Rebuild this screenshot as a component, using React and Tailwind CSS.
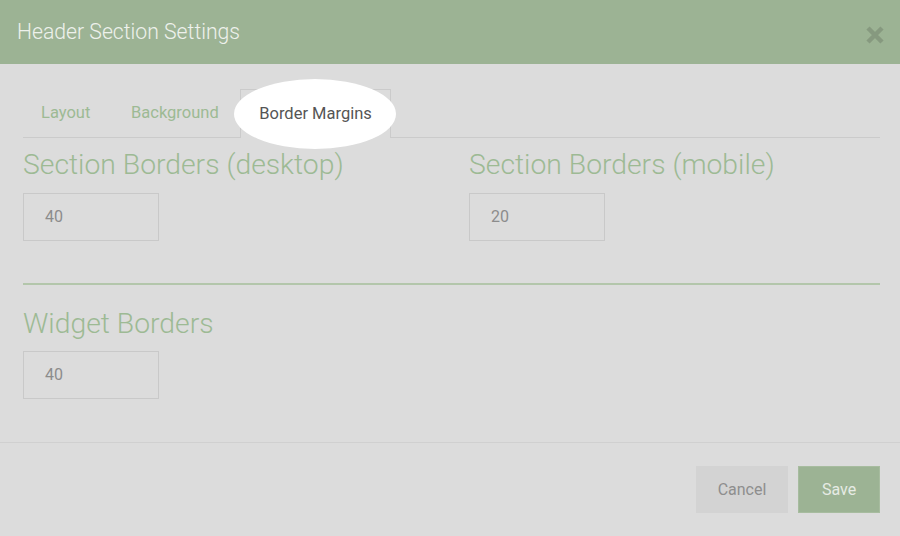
import React from "react";

export default function App() {
  const font = { fontFamily: "Roboto, 'Noto Sans', sans-serif" };
  return (
    <div className="w-[900px] h-[536px] bg-[#dcdcdc] flex flex-col overflow-hidden" style={font}>
      {/* Header */}
      <div className="h-16 shrink-0 bg-[#9cb394] flex items-center justify-between pl-[17px] pr-[15px]">
        <div className="text-[21.2px] font-light text-[#eef1ec] leading-none">Header Section Settings</div>
        <svg width="20" height="20" viewBox="0 0 20 20" className="mt-[6px]">
          <path d="M3 3 L17 17 M17 3 L3 17" stroke="#86997f" strokeWidth="4.5" strokeLinecap="butt" />
        </svg>
      </div>

      {/* Body */}
      <div className="flex-1 px-[23px] pr-[20px]">
        {/* Tabs */}
        <div className="mt-[25px] flex border-b border-[#cbcbcb] h-[49px]">
          <div className="w-[88px] pl-[18px] flex items-center text-[16.5px] text-[#9dba94]">Layout</div>
          <div className="w-[125px] ml-[2px] pl-[18px] flex items-center text-[16.5px] text-[#9dba94]">Background</div>
          <div className="relative w-[151px] ml-[2px] h-[49px] border border-b-0 border-[#cbcbcb] bg-[#dcdcdc] flex items-center justify-center text-[16.5px] text-[#555555]">
            <div className="absolute left-[-7px] top-[-11px] w-[162px] h-[70px] rounded-[50%] bg-white" />
            <span className="relative z-10">Border Margins</span>
          </div>
        </div>

        {/* Section borders */}
        <div className="flex mt-[10px]">
          <div className="w-[446px]">
            <div className="text-[28.3px] font-light leading-[32px] pt-[1px] text-[#9dba94]">Section Borders (desktop)</div>
            <div className="mt-[12px] w-[136px] h-[48px] border border-[#c9c9c9] flex items-center pl-[21px] text-[16px] text-[#8c8c8c]">40</div>
          </div>
          <div>
            <div className="text-[28.3px] font-light leading-[32px] pt-[1px] text-[#9dba94]">Section Borders (mobile)</div>
            <div className="mt-[12px] w-[136px] h-[48px] border border-[#c9c9c9] flex items-center pl-[21px] text-[16px] text-[#8c8c8c]">20</div>
          </div>
        </div>

        <div className="mt-[42px] h-[2px] bg-[#b3c6ab]" />

        <div className="mt-[22px]">
          <div className="text-[28.3px] font-light leading-[32px] pt-[1px] text-[#9dba94]">Widget Borders</div>
          <div className="mt-[11px] w-[136px] h-[48px] border border-[#c9c9c9] flex items-center pl-[21px] text-[16px] text-[#8c8c8c]">40</div>
        </div>
      </div>

      {/* Footer */}
      <div className="h-[94px] shrink-0 border-t border-[#d0d0d0] flex items-center justify-end gap-[10px] pr-[20px]">
        <button className="w-[92px] h-[47px] bg-[#d3d3d3] text-[16px] text-[#8e8e8e]" style={font}>Cancel</button>
        <button className="w-[82px] h-[47px] bg-[#9cb394] border border-[#a7bc9f] text-[16px] text-[#e6ebe4]" style={font}>Save</button>
      </div>
    </div>
  );
}
